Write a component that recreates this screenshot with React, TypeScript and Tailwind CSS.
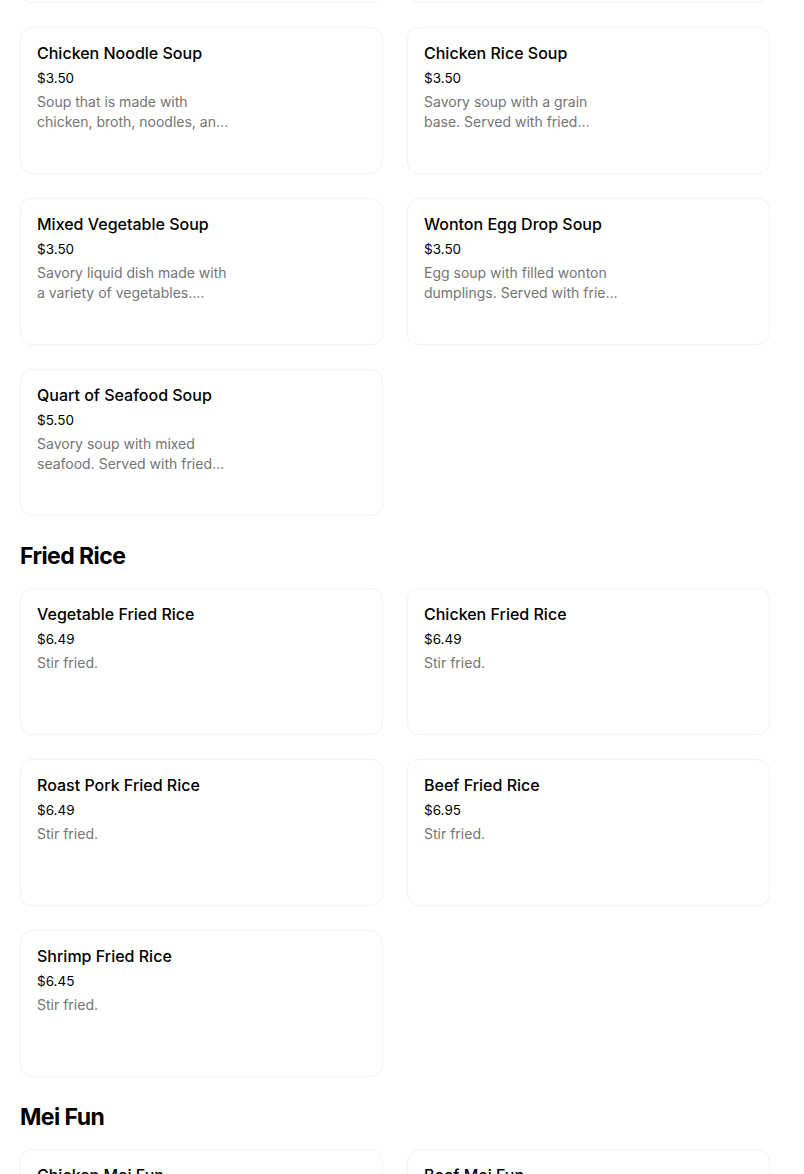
import React from "react"

type Item = { name: string; price: string; desc: string }

const sections: { title?: string; items: Item[] }[] = [
  {
    items: [
      { name: "Chicken Noodle Soup", price: "$3.50", desc: "Soup that is made with chicken, broth, noodles, and vegetables." },
      { name: "Chicken Rice Soup", price: "$3.50", desc: "Savory soup with a grain base. Served with fried noodles." },
      { name: "Mixed Vegetable Soup", price: "$3.50", desc: "Savory liquid dish made with a variety of vegetables. Served with fried noodles." },
      { name: "Wonton Egg Drop Soup", price: "$3.50", desc: "Egg soup with filled wonton dumplings. Served with fried noodles." },
      { name: "Quart of Seafood Soup", price: "$5.50", desc: "Savory soup with mixed seafood. Served with fried noodles." },
    ],
  },
  {
    title: "Fried Rice",
    items: [
      { name: "Vegetable Fried Rice", price: "$6.49", desc: "Stir fried." },
      { name: "Chicken Fried Rice", price: "$6.49", desc: "Stir fried." },
      { name: "Roast Pork Fried Rice", price: "$6.49", desc: "Stir fried." },
      { name: "Beef Fried Rice", price: "$6.95", desc: "Stir fried." },
      { name: "Shrimp Fried Rice", price: "$6.45", desc: "Stir fried." },
    ],
  },
  {
    title: "Mei Fun",
    items: [
      { name: "Chicken Mei Fun", price: "$6.95", desc: "Thin rice noodles stir fried." },
      { name: "Beef Mei Fun", price: "$7.25", desc: "Thin rice noodles stir fried." },
    ],
  },
]

function MenuCard({ item }: { item: Item }) {
  return (
    <div className="h-[147px] rounded-xl border border-[#f2f2f2] bg-white px-4 pt-[13px]">
      <div className="text-base font-medium leading-6 text-black">{item.name}</div>
      <div className="mt-[3px] text-[13.5px] leading-5 text-black">{item.price}</div>
      <p className="mt-1 line-clamp-2 w-[196px] text-sm leading-5 text-[#757575]">{item.desc}</p>
    </div>
  )
}

export default function App() {
  return (
    <div className="h-[1174px] overflow-hidden bg-white font-['Inter','Liberation_Sans',sans-serif]">
      <div className="w-[770px] pl-5">
        {/* bottom edge of the previous row, scrolled out of view */}
        <div className="-mt-[144px] mb-6 grid grid-cols-2 gap-6">
          <div className="h-[147px] rounded-xl border border-[#f2f2f2] bg-white" />
          <div className="h-[147px] rounded-xl border border-[#f2f2f2] bg-white" />
        </div>
        {sections.map((section, i) => (
          <div key={i}>
            {section.title && (
              <h2 className="mb-4 pt-6 text-[23px] font-bold leading-8 tracking-tight text-black">
                {section.title}
              </h2>
            )}
            <div className="grid grid-cols-2 gap-6">
              {section.items.map((item) => (
                <MenuCard key={item.name} item={item} />
              ))}
            </div>
          </div>
        ))}
      </div>
    </div>
  )
}
